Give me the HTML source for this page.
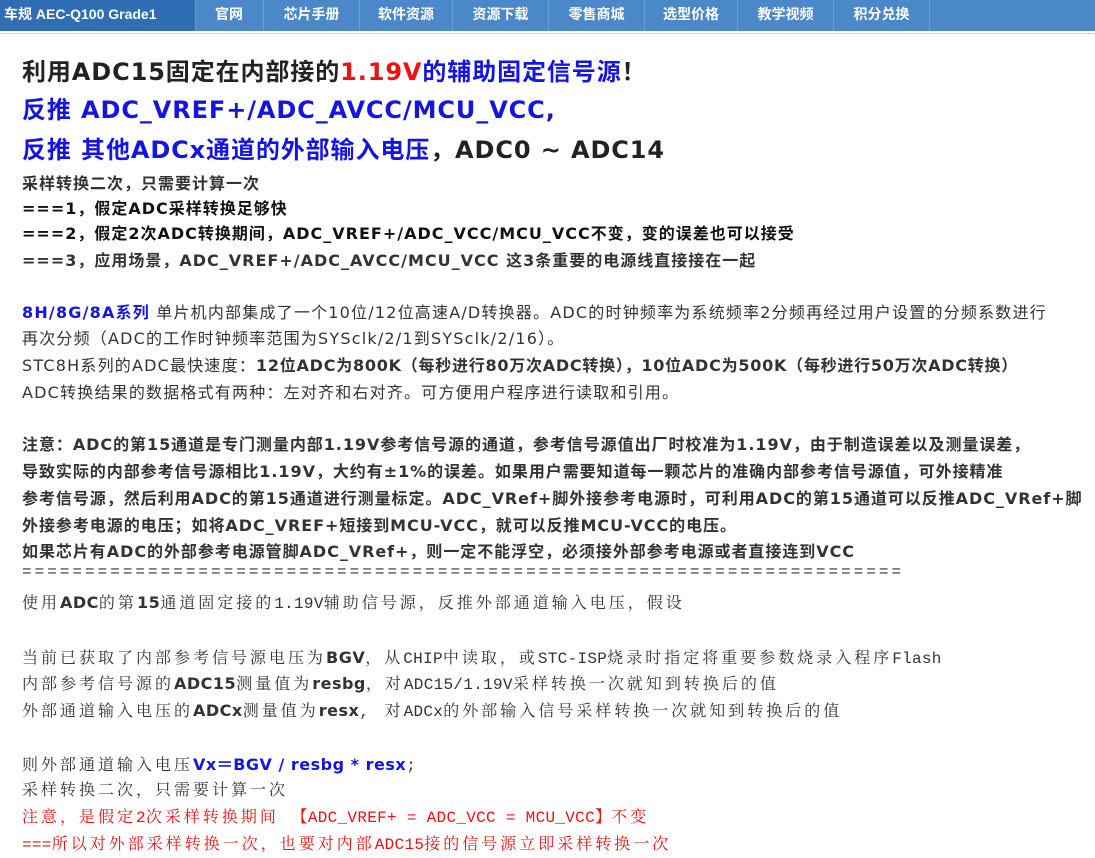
<!DOCTYPE html>
<html><head><meta charset="utf-8"><style>
body{margin:0;width:1095px;height:858px;overflow:hidden;background:#fff;font-family:"DejaVu Sans","Noto Sans CJK SC",sans-serif;color:#333;}
.nav{position:absolute;left:0;top:0;width:1095px;height:31px;background:#4b88c9;}
.nav span{position:absolute;top:0;height:31px;line-height:29px;color:#fff;font-size:14px;font-weight:bold;font-family:"Liberation Sans","Noto Sans CJK SC",sans-serif;border-right:1px solid #6d9fd6;text-align:center}
.dot{position:absolute;left:0;top:33px;width:1095px;border-top:1px dotted #bbb}
.l{position:absolute;left:22px;white-space:nowrap;font-size:16px;letter-spacing:1.2px}
.h{font-size:24px;font-weight:bold;color:#222;letter-spacing:0.9px}
.bb{letter-spacing:1px}
.nb{letter-spacing:0.95px}
.b{font-weight:bold}
.bl{color:#1515e0}
.rd{color:#ee1111}
.s{font-family:"Liberation Mono","Noto Serif CJK SC",serif;font-size:16px;letter-spacing:3px}
.s b{font-family:"DejaVu Sans",sans-serif;letter-spacing:0.5px}
.m{letter-spacing:0.3px}
</style></head><body>
<div class="nav">
<span style="left:0;background:#2f6eb5;text-align:left;padding-left:4px;width:191px">车规 AEC-Q100 Grade1</span>
<span style="left:195px;width:68px">官网</span>
<span style="left:264px;width:95px">芯片手册</span>
<span style="left:360px;width:92px">软件资源</span>
<span style="left:453px;width:95px">资源下载</span>
<span style="left:549px;width:95px">零售商城</span>
<span style="left:645px;width:92px">选型价格</span>
<span style="left:738px;width:95px">教学视频</span>
<span style="left:834px;width:95px">积分兑换</span>
</div>
<div class="dot"></div>
<div class="l h" style="top:52px">利用ADC15固定在内部接的<span class="rd">1.19V</span><span class="bl">的辅助固定信号源</span>！</div>
<div class="l h bl" style="top:90px">反推 ADC_VREF+/ADC_AVCC/MCU_VCC,</div>
<div class="l h" style="top:130px"><span class="bl">反推 其他ADCx通道的外部输入电压</span>，ADC0 ~ ADC14</div>
<div class="l b bb" style="top:170px">采样转换二次，只需要计算一次</div>
<div class="l b bb" style="top:195px;color:#111">===1，假定ADC采样转换足够快</div>
<div class="l b bb" style="top:220px;color:#111">===2，假定2次ADC转换期间，ADC_VREF+/ADC_VCC/MCU_VCC不变，变的误差也可以接受</div>
<div class="l b bb" style="top:247px">===3，应用场景，ADC_VREF+/ADC_AVCC/MCU_VCC 这3条重要的电源线直接接在一起</div>
<div class="l" style="top:299px"><span class="b bl">8H/8G/8A系列</span> 单片机内部集成了一个10位/12位高速A/D转换器。ADC的时钟频率为系统频率2分频再经过用户设置的分频系数进行</div>
<div class="l" style="top:325px">再次分频（ADC的工作时钟频率范围为SYSclk/2/1到SYSclk/2/16）。</div>
<div class="l" style="top:352px">STC8H系列的ADC最快速度：<b style="letter-spacing:0.75px">12位ADC为800K（每秒进行80万次ADC转换），10位ADC为500K（每秒进行50万次ADC转换）</b></div>
<div class="l" style="top:379px">ADC转换结果的数据格式有两种：左对齐和右对齐。可方便用户程序进行读取和引用。</div>
<div class="l b nb" style="top:431px">注意：ADC的第15通道是专门测量内部1.19V参考信号源的通道，参考信号源值出厂时校准为1.19V，由于制造误差以及测量误差，</div>
<div class="l b nb" style="top:458px">导致实际的内部参考信号源相比1.19V，大约有±1%的误差。如果用户需要知道每一颗芯片的准确内部参考信号源值，可外接精准</div>
<div class="l b nb" style="top:485px">参考信号源，然后利用ADC的第15通道进行测量标定。ADC_VRef+脚外接参考电源时，可利用ADC的第15通道可以反推ADC_VRef+脚</div>
<div class="l b nb" style="top:512px">外接参考电源的电压；如将ADC_VREF+短接到MCU-VCC，就可以反推MCU-VCC的电压。</div>
<div class="l b nb" style="top:538px">如果芯片有ADC的外部参考电源管脚ADC_VRef+，则一定不能浮空，必须接外部参考电源或者直接连到VCC</div>
<div class="l s" style="top:563px">======================================================================</div>
<div class="l s" style="top:590px">使用<b>ADC</b>的第<b>15</b>通道固定接的<span class="m">1.19V</span>辅助信号源，反推外部通道输入电压，假设</div>
<div class="l s" style="top:645px">当前已获取了内部参考信号源电压为<b>BGV</b>，从<span class="m">CHIP</span>中读取，或<span class="m">STC-ISP</span>烧录时指定将重要参数烧录入程序<span class="m">Flash</span></div>
<div class="l s" style="top:671px">内部参考信号源的<b>ADC15</b>测量值为<b>resbg</b>，对<span class="m">ADC15/1.19V</span>采样转换一次就知到转换后的值</div>
<div class="l s" style="top:698px">外部通道输入电压的<b>ADCx</b>测量值为<b>resx</b>, 对<span class="m">ADCx</span>的外部输入信号采样转换一次就知到转换后的值</div>
<div class="l s" style="top:751px">则外部通道输入电压<b class="bl">Vx＝BGV / resbg * resx</b>;</div>
<div class="l s" style="top:777px">采样转换二次，只需要计算一次</div>
<div class="l s rd" style="top:804px">注意，是假定<span class="m">2</span>次采样转换期间 <span class="m">【ADC_VREF+ = ADC_VCC = MCU_VCC】</span>不变</div>
<div class="l s rd" style="top:831px"><span class="m">===</span>所以对外部采样转换一次，也要对内部<span class="m">ADC15</span>接的信号源立即采样转换一次</div>
</body></html>
